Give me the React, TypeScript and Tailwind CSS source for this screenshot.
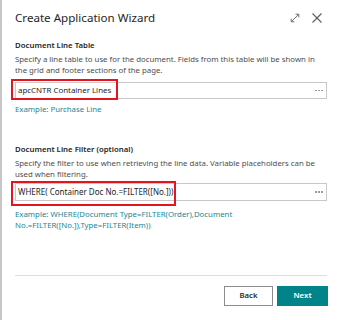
import React from "react";

function ExpandIcon() {
  return (
    <svg width="10" height="10" viewBox="0 0 10 10" fill="none" stroke="#707070" strokeWidth="1">
      <path d="M1.2 8.8 L8.8 1.2" />
      <path d="M5.6 1.2 H8.8 V4.4" />
      <path d="M1.2 5.6 V8.8 H4.4" />
    </svg>
  );
}

function CloseIcon() {
  return (
    <svg width="10" height="10" viewBox="0 0 10 10" fill="none" stroke="#5c5c5c" strokeWidth="1.1">
      <path d="M0.5 0.5 L9.5 9.5" />
      <path d="M9.5 0.5 L0.5 9.5" />
    </svg>
  );
}

function Dots() {
  return (
    <span className="flex items-center gap-[1px]">
      <span className="w-[2px] h-[1.5px] bg-[#9b9b9b]" />
      <span className="w-[2px] h-[1.5px] bg-[#9b9b9b]" />
      <span className="w-[2px] h-[1.5px] bg-[#9b9b9b]" />
    </span>
  );
}

export default function App() {
  return (
    <div className="w-[341px] h-[320px] bg-white border-l-2 border-[#c6c6c6] pl-[13px] pr-[13px] font-['Noto_Sans','Open_Sans',sans-serif] text-[#242424] overflow-hidden">
      <div className="mt-[10px] h-[16px] flex items-center justify-between">
        <div className="text-[11.6px] leading-[16px] text-[#1f1f1f]">Create Application Wizard</div>
        <div className="flex items-center gap-[12px] pr-[6px]">
          <ExpandIcon />
          <CloseIcon />
        </div>
      </div>

      <div className="mt-[14px] text-[7.8px] font-semibold leading-[11px] text-[#262626]">Document Line Table</div>
      <div className="mt-[3px] text-[7.8px] leading-[11px] text-[#4d4d4d]">
        Specify a line table to use for the document. Fields from this table will be shown in the grid and footer sections of the page.
      </div>

      <div className="relative mt-[6px] mr-[1px]">
        <div className="h-[17px] border border-[#c8c8c8] flex items-center justify-between pl-[2px] pr-[3px]">
          <span className="text-[7.9px] leading-none text-[#1e1e1e]">apcCNTR Container Lines</span>
          <Dots />
        </div>
        <div className="absolute -left-[4px] -top-[3px] w-[107px] h-[21px] border-2 border-[#e3161f]" />
      </div>

      <div className="mt-[5px] text-[7.8px] leading-[11px] text-[#1b8796]">Example: Purchase Line</div>

      <div className="mt-[29px] text-[7.8px] font-semibold leading-[11px] text-[#262626]">Document Line Filter (optional)</div>
      <div className="mt-[3px] text-[7.8px] leading-[11px] text-[#4d4d4d]">
        Specify the filter to use when retrieving the line data. Variable placeholders can be used when filtering.
      </div>

      <div className="relative mt-[3px] mr-[1px]">
        <div className="h-[18px] border border-[#c8c8c8] flex items-center justify-between pl-[2px] pr-[3px]">
          <span className="text-[8px] leading-none text-[#1e1e1e]">WHERE( Container Doc No.=FILTER([No.]))</span>
          <Dots />
        </div>
        <div className="absolute -left-[4px] -top-[2px] w-[165px] h-[25px] border-2 border-[#e3161f]" />
      </div>

      <div className="mt-[8px] text-[7.8px] leading-[10.5px] text-[#1b8796]">
        Example: WHERE(Document Type=FILTER(Order),Document No.=FILTER([No.]),Type=FILTER(Item))
      </div>

      <div className="mt-[45px] border-t border-[#dedede] mr-[1px]" />

      <div className="mt-[10px] flex justify-end gap-[4px]">
        <button className="w-[49px] h-[20px] border border-[#8c8c8c] bg-white text-[7.8px] font-semibold text-[#2e2e2e] leading-none">
          Back
        </button>
        <button className="w-[51px] h-[20px] bg-[#008489] text-white text-[7.8px] font-semibold leading-none">
          Next
        </button>
      </div>
    </div>
  );
}
